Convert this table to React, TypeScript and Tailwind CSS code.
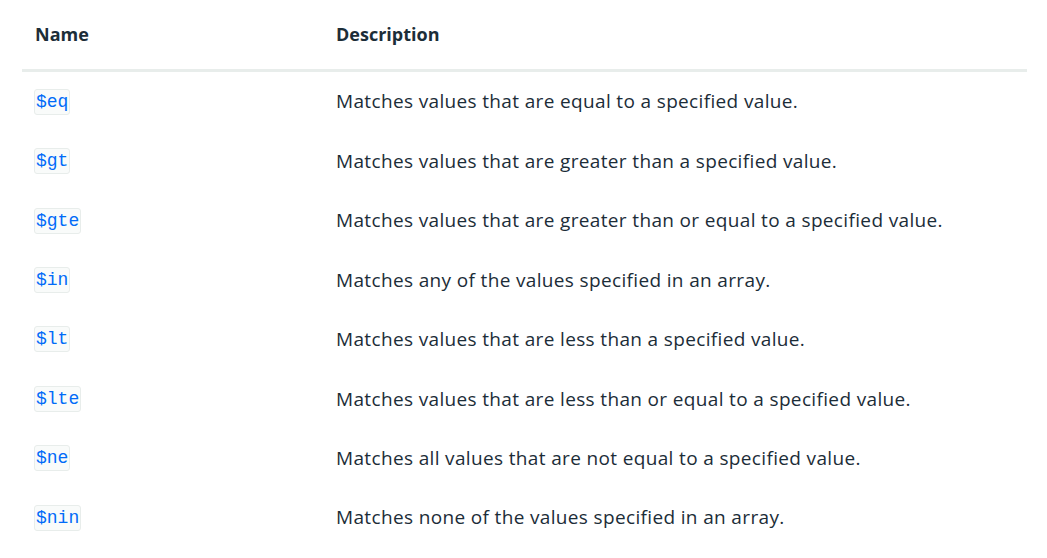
import React from "react";

const rows: [string, string][] = [
  ["$eq", "Matches values that are equal to a specified value."],
  ["$gt", "Matches values that are greater than a specified value."],
  ["$gte", "Matches values that are greater than or equal to a specified value."],
  ["$in", "Matches any of the values specified in an array."],
  ["$lt", "Matches values that are less than a specified value."],
  ["$lte", "Matches values that are less than or equal to a specified value."],
  ["$ne", "Matches all values that are not equal to a specified value."],
  ["$nin", "Matches none of the values specified in an array."],
];

export default function App() {
  return (
    <div className="w-[1047px] h-[558px] overflow-hidden bg-white pl-[22px] pr-[20px] text-[#1c2d38]" style={{ fontFamily: "'Open Sans', 'Noto Sans', sans-serif" }}>
      <div className="flex h-[69px] items-center border-b-[3px] border-[#e8edeb] box-content">
        <div className="w-[301px] pl-[13px] text-[18px] font-bold">Name</div>
        <div className="pl-[13px] text-[18px] font-bold">Description</div>
      </div>
      {rows.map(([op, desc]) => (
        <div key={op} className="flex h-[59.43px] items-center">
          <div className="w-[301px] pl-[12px]">
            <span
              className="inline-block rounded-[3px] border border-[#e8edeb] bg-[#f9fbfa] px-[1px] text-[18px] leading-[24px] text-[#016bf8]"
              style={{ fontFamily: "'Liberation Mono', 'DejaVu Sans Mono', monospace" }}
            >
              {op}
            </span>
          </div>
          <div className="pl-[13px] text-[19px] tracking-[0.35px]">{desc}</div>
        </div>
      ))}
    </div>
  );
}
